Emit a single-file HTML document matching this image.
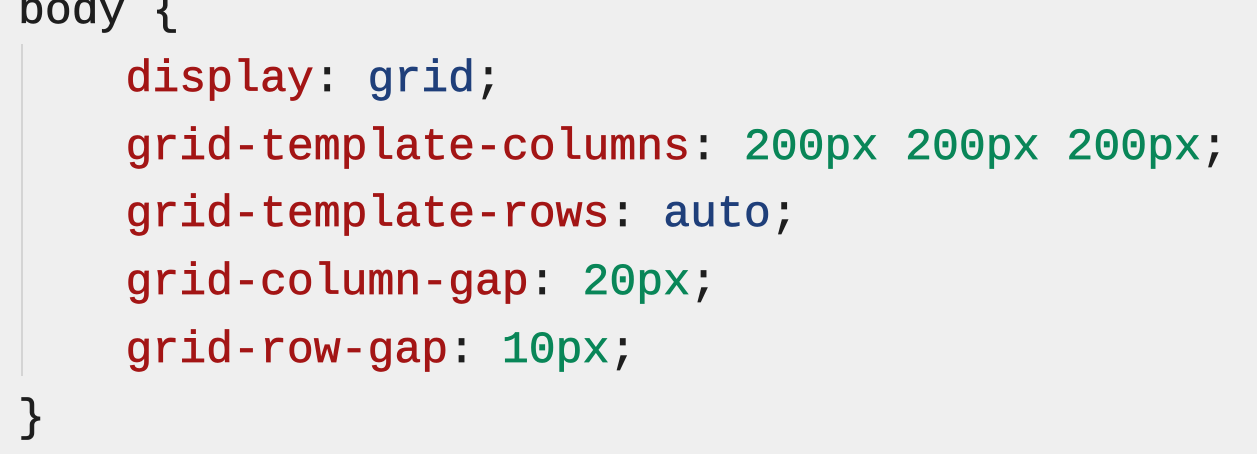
<!DOCTYPE html>
<html><head><meta charset="utf-8"><style>
html,body{margin:0;padding:0;}
body{width:1257px;height:445px;background:#efefef;overflow:hidden;position:relative;}
.code{position:absolute;left:18px;top:-21px;font-family:"Liberation Mono",monospace;font-size:44.8px;line-height:67.8px;white-space:pre;color:#1e1e1e;-webkit-text-stroke:0.7px currentColor;}
.p{color:#a31515}.k{color:#1f3f7a}.n{color:#098658}
.guide{position:absolute;left:21px;top:44px;width:2px;height:332px;background:#d4d4d4;}
</style></head><body>
<div class="guide"></div>
<div class="code">body {
    <span class="p">display</span>: <span class="k">grid</span>;
    <span class="p">grid-template-columns</span>: <span class="n">200px 200px 200px</span>;
    <span class="p">grid-template-rows</span>: <span class="k">auto</span>;
    <span class="p">grid-column-gap</span>: <span class="n">20px</span>;
    <span class="p">grid-row-gap</span>: <span class="n">10px</span>;
}</div>
</body></html>
